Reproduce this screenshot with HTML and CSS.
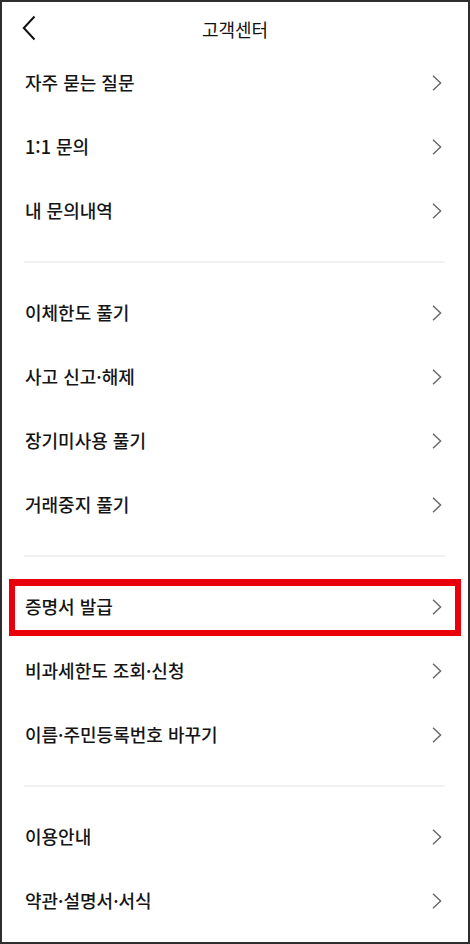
FILE: index.html
```html
<!DOCTYPE html>
<html lang="ko">
<head>
<meta charset="utf-8">
<title>고객센터</title>
<link rel="stylesheet" href="styles.css">
</head>
<body>
<div class="frame">
  <header class="header">
    <svg class="back" width="14" height="26" viewBox="0 0 14 26"><path d="M12.5 1.5 L1.8 13 L12.5 24.5" fill="none" stroke="#111" stroke-width="2"/></svg>
    <h1 class="title">고객센터</h1>
  </header>
  <ul class="list">
    <li class="row"><span>자주 묻는 질문</span><svg class="chev" width="10" height="16" viewBox="0 0 10 16"><path d="M1 0.8 L8.6 8 L1 15.2" fill="none" stroke="#666" stroke-width="1.4"/></svg></li>
    <li class="row"><span>1:1 문의</span><svg class="chev" width="10" height="16" viewBox="0 0 10 16"><path d="M1 0.8 L8.6 8 L1 15.2" fill="none" stroke="#666" stroke-width="1.4"/></svg></li>
    <li class="row"><span>내 문의내역</span><svg class="chev" width="10" height="16" viewBox="0 0 10 16"><path d="M1 0.8 L8.6 8 L1 15.2" fill="none" stroke="#666" stroke-width="1.4"/></svg></li>
  </ul>
  <div class="divider"></div>
  <ul class="list">
    <li class="row"><span>이체한도 풀기</span><svg class="chev" width="10" height="16" viewBox="0 0 10 16"><path d="M1 0.8 L8.6 8 L1 15.2" fill="none" stroke="#666" stroke-width="1.4"/></svg></li>
    <li class="row"><span>사고 신고·해제</span><svg class="chev" width="10" height="16" viewBox="0 0 10 16"><path d="M1 0.8 L8.6 8 L1 15.2" fill="none" stroke="#666" stroke-width="1.4"/></svg></li>
    <li class="row"><span>장기미사용 풀기</span><svg class="chev" width="10" height="16" viewBox="0 0 10 16"><path d="M1 0.8 L8.6 8 L1 15.2" fill="none" stroke="#666" stroke-width="1.4"/></svg></li>
    <li class="row"><span>거래중지 풀기</span><svg class="chev" width="10" height="16" viewBox="0 0 10 16"><path d="M1 0.8 L8.6 8 L1 15.2" fill="none" stroke="#666" stroke-width="1.4"/></svg></li>
  </ul>
  <div class="divider"></div>
  <ul class="list">
    <li class="row highlighted"><span>증명서 발급</span><svg class="chev" width="10" height="16" viewBox="0 0 10 16"><path d="M1 0.8 L8.6 8 L1 15.2" fill="none" stroke="#666" stroke-width="1.4"/></svg></li>
    <li class="row"><span>비과세한도 조회·신청</span><svg class="chev" width="10" height="16" viewBox="0 0 10 16"><path d="M1 0.8 L8.6 8 L1 15.2" fill="none" stroke="#666" stroke-width="1.4"/></svg></li>
    <li class="row"><span>이름·주민등록번호 바꾸기</span><svg class="chev" width="10" height="16" viewBox="0 0 10 16"><path d="M1 0.8 L8.6 8 L1 15.2" fill="none" stroke="#666" stroke-width="1.4"/></svg></li>
  </ul>
  <div class="divider"></div>
  <ul class="list">
    <li class="row"><span>이용안내</span><svg class="chev" width="10" height="16" viewBox="0 0 10 16"><path d="M1 0.8 L8.6 8 L1 15.2" fill="none" stroke="#666" stroke-width="1.4"/></svg></li>
    <li class="row"><span>약관·설명서·서식</span><svg class="chev" width="10" height="16" viewBox="0 0 10 16"><path d="M1 0.8 L8.6 8 L1 15.2" fill="none" stroke="#666" stroke-width="1.4"/></svg></li>
  </ul>
</div>
</body>
</html>
```

FILE: styles.css
```css
* { box-sizing: border-box; }
html, body { margin: 0; padding: 0; background: #fff; }
body {
  font-family: "Noto Sans CJK KR", "Noto Sans", sans-serif;
  color: #151515;
}
.frame {
  width: 470px;
  height: 944px;
  border: 2px solid #2e2e2e;
  background: #fff;
  overflow: hidden;
}
.header {
  position: relative;
  height: 49px;
  padding-top: 4px;
  display: flex;
  align-items: center;
  justify-content: center;
}
.back {
  position: absolute;
  left: 20px;
  top: 13px;
}
.title {
  margin: 0;
  font-size: 18px;
  font-weight: 400;
  color: #111;
  line-height: 1;
}
.list {
  list-style: none;
  margin: 0;
  padding: 0;
}
.row {
  position: relative;
  height: 64px;
  padding: 0 26px 2px 23px;
  display: flex;
  align-items: center;
  justify-content: space-between;
  font-size: 18px;
  line-height: 1;
}
.row span { font-weight: 500; }
.chev { flex: none; margin-top: 2px; }
.highlighted::after {
  content: "";
  position: absolute;
  left: 7px;
  right: 7px;
  top: 4px;
  bottom: 3px;
  border: 6px solid #e8000b;
  border-top-width: 7px;
  pointer-events: none;
}
.divider {
  height: 2px;
  background: #eff1f3;
  margin: 18px 23px 18px 22px;
}
```
